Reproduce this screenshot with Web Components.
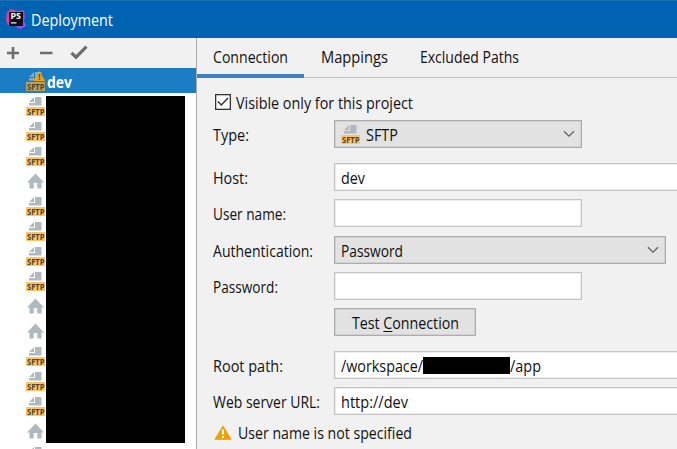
<!DOCTYPE html>
<html lang="en"><head><meta charset="utf-8"><title>Deployment</title>
<style>html,body{margin:0;height:100%;overflow:hidden}body{font:15.5px/20px "Open Sans","Noto Sans",sans-serif;color:#111;background:#f1f1f1}</style></head>
<body><deployment-dialog></deployment-dialog>
<script>
const define=(name,html,setup)=>customElements.define(name,class extends HTMLElement{
  constructor(){super();this.attachShadow({mode:'open'}).innerHTML=html}
  connectedCallback(){if(setup)setup(this,this.shadowRoot)}
});

/* Text condensed horizontally to the width given in `w`. */
define('fit-text',`<style>:host{display:block;flex:none;white-space:nowrap;height:20px}span{display:inline-block;transform-origin:0 50%;white-space:pre}</style><span><slot></slot></span>`,
(h,r)=>{const s=r.querySelector('span'),w=+h.getAttribute('w');h.style.width=w+'px';s.style.transform=`translateY(1px) scaleX(${w/s.getBoundingClientRect().width})`});

define('sftp-icon',`<style>:host{display:block;flex:none;width:19px;height:20px}svg{display:block;overflow:visible}.w{display:none}:host([warn]) .w{display:inline}:host([warn]) .b{fill:#b7a160}:host([warn]) .p{fill:#8ea9bc}:host([cut]) .t{display:none}text{font:bold 9.3px "Open Sans",sans-serif}</style>
<svg width="19" height="20"><path class="p" fill="#afb9bf" d="M9 1H15.5V9.5H3V7H9Z M3 6L8 1V6Z"/><rect class="b" y="11" width="19" height="9" fill="#fbc468"/><text class="t" x="1" y="18.8" textLength="17.5" lengthAdjust="spacingAndGlyphs" fill="#51432a">SFTP</text>
<g class="w"><path fill="#f0a50a" d="M13.5 0L19 10H8Z"/><path stroke="#4b4d4d" stroke-width="1.5" d="M13.5 3V6.5M13.5 7.5V9"/></g></svg>`);

define('home-icon',`<style>:host{display:block;flex:none;width:17px;height:16px}svg{display:block}</style>
<svg width="17" height="16"><path fill="#afb9bf" d="M8.5 .5L17 9.5H14.5V15.5H10.3V10H6.7V15.5H2.5V9.5H0Z"/></svg>`);

define('title-bar',`<style>:host{display:flex;height:38px;flex:none;background:#0063b1;color:#fff;align-items:center;gap:5px;padding:0 0 2px 6px;box-sizing:border-box;border-top:1px solid #1a70b5}svg{display:block}</style>
<svg width="20" height="20"><defs><linearGradient id="g" x1="0" y1="0" x2="1" y2="1"><stop offset="0" stop-color="#ff318c"/><stop offset=".35" stop-color="#e43aaa"/><stop offset=".55" stop-color="#7651fa"/><stop offset="1" stop-color="#b74af7"/></linearGradient></defs><path fill="url(#g)" d="M1 3L5 0L11 2L18 1L19 7L18 12L20 17L14 20L9 17L2 17L0 11Z"/><rect x="3" y="3" width="14" height="14" fill="#120d12"/><text x="4.5" y="10" textLength="10.5" lengthAdjust="spacingAndGlyphs" fill="#fff" style="font:bold 8px 'Open Sans',sans-serif">PS</text><path fill="#fff" d="M5 13.3H10.5V14.5H5Z"/></svg><fit-text w="82">Deployment</fit-text>`);

define('server-row',`<style>:host{display:flex;height:25px;box-sizing:border-box;padding-left:26px;padding-top:3px;gap:2px}:host([home]){padding-top:5px;padding-left:27px}:host([selected]){background:#1b7dc3;color:#fff;font-weight:bold}</style><slot name="icon"></slot><slot></slot>`);

define('server-list',`<style>:host{display:flex;flex-direction:column;width:196px;flex:none;background:#fff;border-right:1px solid #aaa;overflow:hidden;position:relative}
.tools{display:flex;height:30px;background:#f1f1f1;flex:none}.mask{position:absolute;left:46px;top:58px;width:139px;height:347px;background:#000}.rows{flex:none}svg{display:block}</style>
<div class="tools"><svg width="100" height="30" fill="none" stroke="#6e6e6e" stroke-width="2.6"><path d="M13 9V21M7 15H19M40 15H52.5"/><path stroke-width="3.2" d="M71.5 14.8L76 19.2L86.5 8.7"/></svg></div>
<div class="rows"></div><div class="mask"></div>`,
(h,r)=>{r.querySelector('.rows').innerHTML='<server-row selected><sftp-icon slot="icon" warn></sftp-icon><fit-text w="25">dev</fit-text></server-row>'+[...'sssHssssHHsssHc'].map(k=>k==='H'?'<server-row home><home-icon slot="icon"></home-icon></server-row>':`<server-row><sftp-icon slot="icon"${k==='c'?' cut':''}></sftp-icon></server-row>`).join('')});

define('tab-item',`<style>:host{display:block;box-sizing:border-box;height:40px;padding:8px 16px 0}:host([active]){border-bottom:4px solid #3f81c8}</style><slot></slot>`);
define('tab-strip',`<style>:host{display:flex;gap:.5px;height:40px;flex:none;background:linear-gradient(#c0c0c0,#c0c0c0) 0 39px/100% 1px no-repeat}</style><slot></slot>`);

define('form-row',`<style>:host{display:flex;height:28px;align-items:center;margin-top:var(--gap,8px)}.l{width:121px;flex:none}</style><div class="l"><slot name="label"></slot></div><slot></slot>`);
define('text-field',`<style>:host{display:flex;align-items:center;box-sizing:border-box;flex:none;height:28px;width:var(--w,400px);background:#fff;border:1px solid #c3c3c3;box-shadow:inset 0 0 0 .5px #dedede;padding-left:6px}</style><slot></slot>`);
define('combo-box',`<style>:host{display:flex;align-items:center;box-sizing:border-box;flex:none;height:28px;width:var(--w);background:#e2e2e2;border:1px solid #adadad;box-shadow:inset 0 0 0 1px #d0d0d0;padding:0 6px}svg{display:block;margin-left:auto}</style><slot></slot><svg width="12" height="8" fill="none" stroke="#606060" stroke-width="1.3"><path d="M1 1.2L6 6.2L11 1.2"/></svg>`);
define('push-button',`<style>:host{display:flex;align-items:center;justify-content:center;box-sizing:border-box;height:28px;width:142px;padding-bottom:1px;background:#e2e2e2;border:1px solid #adadad;box-shadow:inset 0 0 0 1px #d0d0d0}</style><slot></slot>`);
define('check-option',`<style>:host{display:flex;height:20px;align-items:center;gap:5px;padding-left:2px;margin-top:14px}svg{display:block}</style><svg width="16" height="16"><rect x=".65" y=".65" width="14.7" height="14.7" fill="#fff" stroke="#333" stroke-width="1.3"/><path fill="none" stroke="#333" stroke-width="1.5" d="M2.8 7.5L6.3 11L13 4"/></svg><slot></slot>`);
define('warning-line',`<style>:host{display:flex;height:20px;align-items:center;gap:6px;padding-left:1px;margin-top:7px}svg{display:block}</style><svg width="18" height="15"><path fill="#eda200" stroke="#eda200" stroke-width="1" stroke-linejoin="round" d="M9 1L17 14.3H1Z"/><path stroke="#fff" stroke-width="2" d="M9 4.5V9.5M9 11V13"/></svg><slot></slot>`);

define('settings-pane',`<style>:host{display:flex;flex-direction:column;flex:1;min-width:0;overflow:hidden}.form{padding-left:16px}.mask{width:87px;height:17px;background:#000;flex:none}u{text-underline-offset:2px;text-decoration-thickness:1px}sftp-icon{margin-right:6px}</style>
<tab-strip><tab-item active><fit-text w="75">Connection</fit-text></tab-item><tab-item><fit-text w="67">Mappings</fit-text></tab-item><tab-item><fit-text w="99">Excluded Paths</fit-text></tab-item></tab-strip>
<div class="form">
<check-option><fit-text w="177">Visible only for this project</fit-text></check-option>
<form-row><fit-text slot="label" w="36">Type:</fit-text><combo-box style="--w:248px"><sftp-icon></sftp-icon><fit-text w="32">SFTP</fit-text></combo-box></form-row>
<form-row style="--gap:15px"><fit-text slot="label" w="35">Host:</fit-text><text-field><fit-text w="24">dev</fit-text></text-field></form-row>
<form-row><fit-text slot="label" w="73">User name:</fit-text><text-field style="--w:248px"></text-field></form-row>
<form-row style="--gap:9px"><fit-text slot="label" w="100">Authentication:</fit-text><combo-box style="--w:332px"><fit-text w="62">Password</fit-text></combo-box></form-row>
<form-row><fit-text slot="label" w="65">Password:</fit-text><text-field style="--w:248px"></text-field></form-row>
<form-row><push-button><fit-text w="107">Test <u>C</u>onnection</fit-text></push-button></form-row>
<form-row style="--gap:15px"><fit-text slot="label" w="70">Root path:</fit-text><text-field><fit-text w="82">/workspace/</fit-text><div class="mask"></div><fit-text w="31">/app</fit-text></text-field></form-row>
<form-row><fit-text slot="label" w="107">Web server URL:</fit-text><text-field><fit-text w="67">http://dev</fit-text></text-field></form-row>
<warning-line><fit-text w="174">User name is not specified</fit-text></warning-line>
</div>`);

define('deployment-dialog',`<style>:host{display:flex;flex-direction:column;width:100vw;height:100vh}.body{display:flex;flex:1;min-height:0}</style><title-bar></title-bar><div class="body"><server-list></server-list><settings-pane></settings-pane></div>`);
</script></body></html>
